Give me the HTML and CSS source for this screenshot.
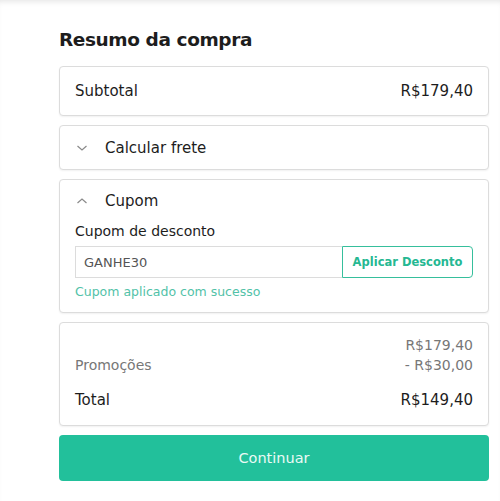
FILE: index.html
```html
<!DOCTYPE html>
<html lang="pt-BR">
  <head>
    <meta charset="UTF-8" />
    <meta name="viewport" content="width=device-width, initial-scale=1.0" />
    <title>Resumo da compra</title>
    <link rel="stylesheet" href="styles.css">
  </head>
  <body>
    <div class="summary">
      <h2 class="summary-title">Resumo da compra</h2>

      <div class="card row">
        <span>Subtotal</span>
        <span>R$179,40</span>
      </div>

      <div class="card toggle">
        <svg class="chevron" width="12" height="8" viewBox="0 0 12 8">
          <path d="M1.5 2 L6 6 L10.5 2" fill="none" stroke="#8a8a8a" stroke-width="1.2" />
        </svg>
        <span>Calcular frete</span>
      </div>

      <div class="card coupon">
        <div class="toggle">
          <svg class="chevron" width="12" height="8" viewBox="0 0 12 8">
            <path d="M1.5 6 L6 2 L10.5 6" fill="none" stroke="#8a8a8a" stroke-width="1.2" />
          </svg>
          <span>Cupom</span>
        </div>
        <label class="coupon-label" for="coupon">Cupom de desconto</label>
        <div class="coupon-field">
          <input type="text" id="coupon" value="GANHE30" />
          <button class="apply">Aplicar Desconto</button>
        </div>
        <p class="coupon-ok">Cupom aplicado com sucesso</p>
      </div>

      <div class="card totals">
        <div class="line muted"><span></span><span>R$179,40</span></div>
        <div class="line muted"><span>Promoções</span><span>- R$30,00</span></div>
        <div class="line total"><span>Total</span><span>R$149,40</span></div>
      </div>

      <button class="continue">Continuar</button>
    </div>
  </body>
</html>
```

FILE: styles.css
```css
* {
  margin: 0;
  padding: 0;
  box-sizing: border-box;
}
body {
  font-family: "DejaVu Sans", sans-serif;
  background-color: #fff;
  color: #1d1d1d;
  box-shadow: inset 0 5px 6px -4px rgba(0, 0, 0, 0.12);
  min-height: 501px;
}
.summary {
  width: 430px;
  margin-left: 59px;
  padding-top: 28px;
  display: flex;
  flex-direction: column;
  gap: 9px;
}
.summary-title {
  font-size: 18.5px;
  font-weight: bold;
  line-height: 24px;
  margin-bottom: 5px;
  letter-spacing: -0.4px;
}
.card {
  border: 1px solid #dcdcdc;
  border-radius: 4px;
  background-color: #fff;
  box-shadow: 0 1px 2px rgba(0, 0, 0, 0.06);
  font-size: 15px;
}
.row {
  height: 50px;
  padding: 0 15px;
  display: flex;
  justify-content: space-between;
  align-items: center;
}
.toggle {
  height: 45px;
  padding: 0 15px 0 16px;
  display: flex;
  align-items: center;
  gap: 17px;
}
.chevron {
  flex-shrink: 0;
}
.coupon {
  padding-bottom: 12px;
}
.coupon .toggle {
  height: 42px;
}
.coupon-label {
  display: block;
  font-size: 14px;
  padding: 0 15px;
  line-height: 18px;
}
.coupon-field {
  display: flex;
  margin: 6px 15px 0;
  height: 32px;
}
.coupon-field input {
  flex: 1;
  min-width: 0;
  border: 1px solid #dcdcdc;
  border-right: none;
  padding: 0 8px;
  font-family: inherit;
  font-size: 13px;
  color: #555;
  outline: none;
}
.apply {
  width: 131px;
  border: 1px solid #36bf9c;
  border-radius: 0 4px 4px 0;
  background-color: #fff;
  color: #25b892;
  font-family: inherit;
  font-size: 11.5px;
  font-weight: bold;
}
.coupon-ok {
  padding: 6px 15px 0;
  font-size: 12.5px;
  color: #52c2a8;
  line-height: 16px;
}
.totals {
  padding: 12px 15px 15px;
}
.line {
  display: flex;
  justify-content: space-between;
  line-height: 20px;
}
.muted {
  color: #777;
  font-size: 14px;
}
.total {
  margin-top: 15px;
  font-size: 15px;
}
.continue {
  height: 46px;
  border: none;
  border-radius: 4px;
  background-color: #22c09b;
  color: #eafaf5;
  font-family: inherit;
  font-size: 14.5px;
}
```
